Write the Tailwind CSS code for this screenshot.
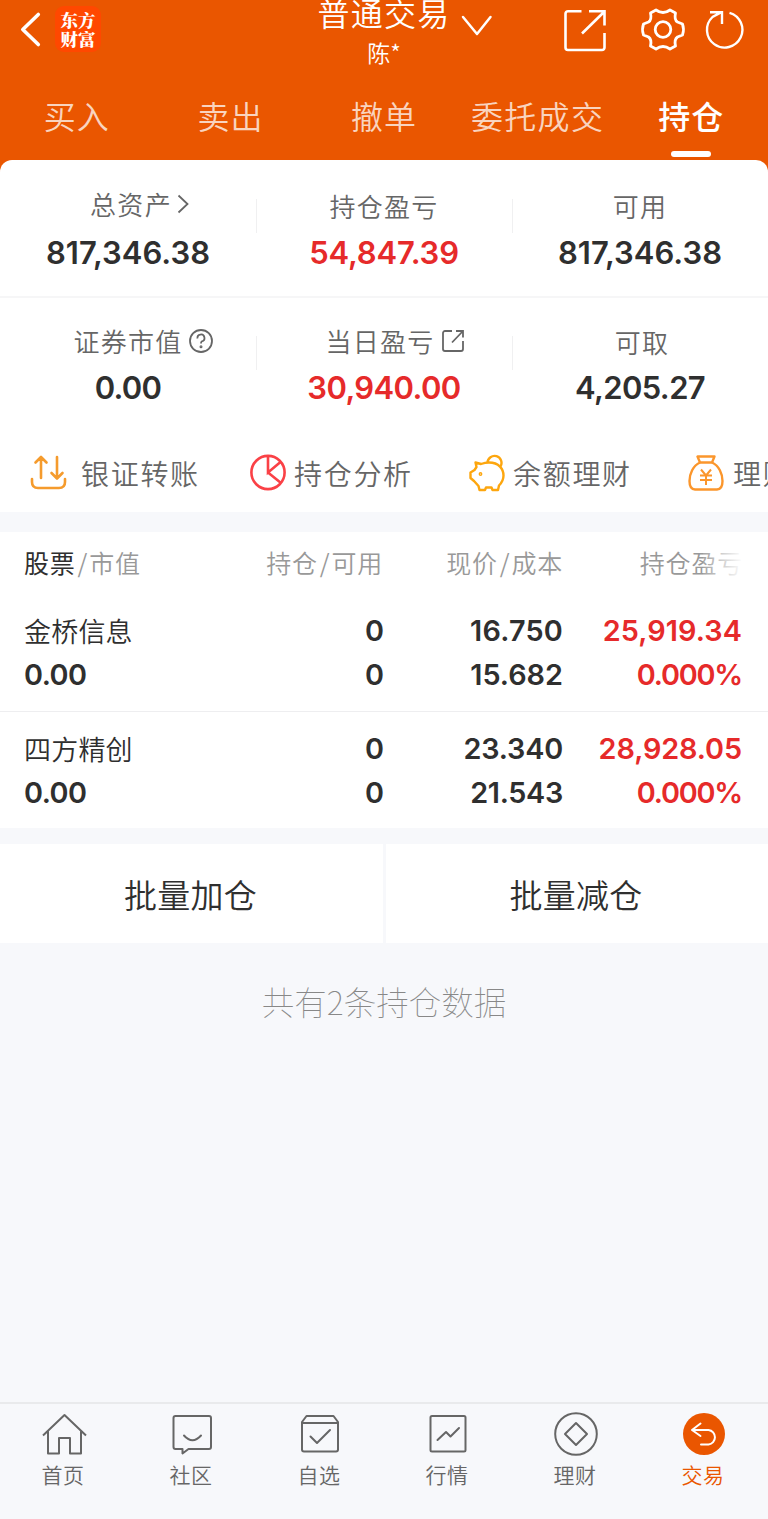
<!DOCTYPE html>
<html lang="zh-CN">
<head>
  <meta charset="UTF-8" />
  <meta name="viewport" content="width=device-width, initial-scale=1" />
  <title>普通交易 - 持仓</title>
  <script src="https://cdn.jsdelivr.net/npm/@tailwindcss/browser@4"></script>
</head>
<body class="w-[768px] h-[1519px] overflow-hidden flex flex-col bg-[#f7f8fb] font-['Noto_Sans_CJK_SC',sans-serif] font-[350] text-[#666]">

  <!-- header -->
  <header class="h-[160px] shrink-0 bg-[#ea5600] text-white flex flex-col">
    <div class="h-[74px] flex items-start">
      <div class="w-[228px] flex">
        <svg class="mt-[10px] ml-[18px] w-6 h-10" viewBox="0 0 24 40" fill="none" stroke="currentColor" stroke-width="3.6" stroke-linecap="round" stroke-linejoin="round"><path d="M20.300 4.500L4.800 19.500L20.300 34.500" /></svg>
        <div class="mt-[6px] ml-[13px] w-[46px] h-[46px] rounded-[9px] bg-[#ff4800] pt-[4px] text-center font-black font-['Noto_Serif_CJK_SC','Noto_Sans_CJK_SC',sans-serif] text-[17.500px] leading-[19px]">东方<br />财富</div>
      </div>
      <div class="w-[312px] h-[74px] flex flex-col items-center">
        <div class="-mt-[7px] h-10 leading-[38px] text-[32px] tracking-[1.300px]">普通交易</div>
        <div class="h-8 mt-[3px] leading-8 text-[23px]">陈*</div>
      </div>
      <svg class="-ml-[80px] mt-[12px] w-[34px] h-[26px]" viewBox="0 0 34 26" fill="none" stroke="currentColor" stroke-width="2.5" stroke-linecap="round" stroke-linejoin="round"><path d="M3 5L17 22L30.500 5" /></svg>
      <svg class="ml-[66px] mt-[6px] w-[48px] h-[48px]" viewBox="0 0 48 48" fill="none" stroke="currentColor" stroke-width="2.600"><path d="M21.500 5.300H8a2.500 2.500 0 0 0-2.500 2.500V41.500a2.500 2.500 0 0 0 2.500 2.500H42a2.500 2.500 0 0 0 2.500-2.500V27M29 5.300H44.500V19.500M44 6L22 27.500" /></svg>
      <svg class="ml-[32px] mt-[6px] w-[46px] h-[48px]" viewBox="0 0 46 48" fill="none" stroke="currentColor" stroke-width="2.800" stroke-linejoin="round"><path d="M16 4Q23 9 30 4L35.500 7Q34 14 37.500 16L42.500 18Q44.500 23.500 42.500 29L37.500 31Q34 33.500 35.500 40L30 43Q23 38 16 43L10.500 40Q12 33.500 8.500 31L3.500 29Q1.500 23.500 3.500 18L8.500 16Q12 14 10.500 7Z" /><circle cx="23" cy="23.500" r="7.800" /></svg>
      <svg class="ml-[17px] mt-[6px] w-[46px] h-[48px]" viewBox="0 0 46 48" fill="none" stroke="currentColor" stroke-width="2.400"><path d="M26.500 6.800A17.700 17.700 0 1 1 9.500 11L17.500 6.600M7 6.300H19V18" /></svg>
    </div>
    <nav class="h-[86px] grid grid-cols-5 text-center text-[32px] leading-[46px] tracking-[1px] pt-[18px] text-white/75">
      <div>买入</div>
      <div>卖出</div>
      <div>撤单</div>
      <div class="whitespace-nowrap tracking-[1.300px]">委托成交</div>
      <div class="text-white font-medium flex flex-col items-center">持仓<span class="mt-[13px] w-10 h-[6px] rounded-full bg-white"></span></div>
    </nav>
  </header>

  <!-- account summary -->
  <section class="bg-[#ea5600] shrink-0">
    <div class="h-[352px] bg-white rounded-t-[12px] overflow-hidden">
      <div class="h-[138px] grid grid-cols-3 border-b-2 border-[#f6f6f7] text-center">
        <div class="pt-[23px]">
          <div class="h-10 flex items-center justify-center text-[26px] tracking-[1.300px] pl-[23px]">总资产<svg class="mt-[2px] ml-[5px] w-3 h-5" viewBox="0 0 12 20" fill="none" stroke="currentColor" stroke-width="1.800"><path d="M1.500 1.500L10.500 10L1.500 18.500" /></svg></div>
          <div class="mt-[12px] h-9 leading-9 font-['Inter'] font-semibold text-[31px] text-[#2f2f2f]">817,346.38</div>
        </div>
        <div class="pt-[25px] relative">
          <i class="absolute left-0 top-[39px] w-px h-[34px] bg-[#f0f0f1]"></i>
          <i class="absolute -right-px top-[39px] w-px h-[34px] bg-[#f0f0f1]"></i>
          <div class="h-10 leading-[41px] text-[26px] tracking-[1.300px]">持仓盈亏</div>
          <div class="mt-[10px] h-9 leading-9 font-['Inter'] font-semibold text-[31px] tracking-[-0.200px] text-[#e62a2a]">54,847.39</div>
        </div>
        <div class="pt-[25px]">
          <div class="h-10 leading-[41px] text-[26px] tracking-[1.300px]">可用</div>
          <div class="mt-[10px] h-9 leading-9 font-['Inter'] font-semibold text-[31px] text-[#2f2f2f]">817,346.38</div>
        </div>
      </div>
      <div class="h-[134px] grid grid-cols-3 text-center">
        <div class="pt-[23px]">
          <div class="h-10 flex items-center justify-center text-[26px] tracking-[1.300px] pl-[31px] -mt-px">证券市值<svg class="mt-[2px] ml-[5px] w-[26px] h-[26px]" viewBox="0 0 26 26" fill="none" stroke="currentColor" stroke-width="1.800"><circle cx="13" cy="13" r="11" /><path d="M9.500 10.500A3.500 3.500 0 1 1 13.800 13.400Q13 13.900 13 15.500" /><circle cx="13" cy="18.700" r=".6" /></svg></div>
          <div class="mt-[10px] h-9 leading-9 font-['Inter'] font-semibold text-[31px] tracking-[-0.700px] text-[#2f2f2f]">0.00</div>
        </div>
        <div class="pt-[23px] relative">
          <i class="absolute left-0 top-[38px] w-px h-[34px] bg-[#f0f0f1]"></i>
          <i class="absolute -right-px top-[38px] w-px h-[34px] bg-[#f0f0f1]"></i>
          <div class="h-10 flex items-center justify-center text-[26px] tracking-[1.300px] pl-[22px] -mt-px">当日盈亏<svg class="mt-[2px] ml-[6px] w-6 h-6" viewBox="0 0 24 24" fill="none" stroke="currentColor" stroke-width="1.800"><path d="M11 2H4a2 2 0 0 0-2 2V20a2 2 0 0 0 2 2H20a2 2 0 0 0 2-2V12M15 2H22V8.500M22 2L11 13.500" /></svg></div>
          <div class="mt-[10px] h-9 leading-9 font-['Inter'] font-semibold text-[31px] tracking-[-0.600px] text-[#e62a2a]">30,940.00</div>
        </div>
        <div class="pt-[23px]">
          <div class="h-10 leading-[42px] text-[26px] tracking-[1.300px] pl-1">可取</div>
          <div class="mt-[9px] h-9 leading-9 font-['Inter'] font-semibold text-[31px] tracking-[-0.600px] text-[#2f2f2f]">4,205.27</div>
        </div>
      </div>

      <!-- shortcuts -->
      <div class="h-[80px] pt-px pl-[29px] flex items-center text-[28px] leading-[40px] tracking-[1.700px] whitespace-nowrap">
        <div class="w-[220px] shrink-0 flex items-center gap-[14px]">
          <svg class="w-[38px] h-[38px]" viewBox="0 0 38 38" fill="none" stroke="#f59b2d" stroke-width="2.600" stroke-linecap="round" stroke-linejoin="round"><path d="M12 24V3M6.500 8.500L12 3L17.500 8.500M28 3V24M22.500 19L28 24.500L33.500 19M3 25V28Q3 34 9 34H30Q36 34 36 28V25" /></svg>
          银证转账
        </div>
        <div class="w-[219px] shrink-0 flex items-center gap-[7px]">
          <svg class="w-[38px] h-[38px]" viewBox="0 0 38 38" fill="none" stroke="#fa4146" stroke-width="2.600"><circle cx="19" cy="18.500" r="16.600" /><path d="M19 2V18.500L31.500 8M19 18.500L32 29" /></svg>
          持仓分析
        </div>
        <div class="w-[219px] shrink-0 flex items-center gap-[7px]">
          <svg class="w-[38px] h-[38px]" viewBox="0 0 38 38" fill="none" stroke="#fda60e" stroke-width="2.400" stroke-linejoin="round"><path d="M7.500 8.500L13 10Q17 8.500 21 8.500C31 8.500 35.500 15 35.500 21.500C35.500 27 33 29.500 31 31.500L30 36H24.500L23.500 33.500H18L17 36H11.500L10.500 32L6 27L2.500 24V18.500L6.500 16L8.500 13Z" /><path d="M19.500 8.500A7 7 0 1 1 32.500 12.500" /><circle cx="12.500" cy="20" r=".7" /></svg>
          余额理财
        </div>
        <div class="w-[219px] shrink-0 flex items-center gap-[8px]">
          <svg class="w-[38px] h-[38px]" viewBox="0 0 38 38" fill="none" stroke="#fb962c" stroke-width="2.400" stroke-linejoin="round"><path d="M13 8.500L10.500 2.500H27.500L25 8.500Z" /><path d="M13 8.500C6 11.500 2.500 20 2.500 27Q2.500 35.500 8 35.500H30Q35.500 35.500 35.500 27C35.500 20 32 11.500 25 8.500" /><path stroke-width="2" d="M14 15.500L19 21.500L24 15.500M19 21.500V31M13 21.500H25M13 26H25" /></svg>
          理财产品
        </div>
      </div>
    </div>
  </section>

  <!-- positions -->
  <section class="mt-5 bg-white shrink-0 h-[296px] pl-6 pr-[26px]">
    <div class="h-[62px] leading-[60px] grid grid-cols-[179px_180px_180px_179px] text-[25px] tracking-[0.800px] text-[#999] text-right whitespace-nowrap">
      <div class="text-left"><span class="text-[#2f2f2f] font-normal">股票</span><span class="pl-[2px] pr-px">/</span>市值</div>
      <div>持仓<span class="pl-[2px] pr-px">/</span>可用</div>
      <div>现价<span class="pl-[2px] pr-px">/</span>成本</div>
      <div class="relative -mr-px">持仓盈亏<i class="absolute right-0 top-0 w-[40px] h-[62px] bg-linear-to-r from-white/10 to-white"></i></div>
    </div>
    <div class="-ml-6 -mr-[26px] pl-6 pr-[26px] h-[118px] border-b border-[#eeeef0] pt-[15px] grid grid-cols-[179px_180px_180px_179px] grid-rows-[44px_44px] leading-[44px] font-['Inter'] font-[570] text-[28.800px] text-[#2f2f2f] text-right">
      <div class="text-left font-['Noto_Sans_CJK_SC'] font-[350] text-[27px] tracking-[0.200px]">金桥信息</div>
      <div class="-mr-px">0</div>
      <div class="tracking-[0.200px]">16.750</div>
      <div class="tracking-[0.100px] text-[#e62a2a]">25,919.34</div>
      <div class="text-left leading-[43px] tracking-[-0.500px]">0.00</div>
      <div class="leading-[43px] -mr-px">0</div>
      <div class="leading-[43px]">15.682</div>
      <div class="leading-[43px] tracking-[-1.200px] text-[#e62a2a]">0.000%</div>
    </div>
    <div class="pt-[15px] grid grid-cols-[179px_180px_180px_179px] grid-rows-[44px_44px] leading-[44px] font-['Inter'] font-[570] text-[28.800px] text-[#2f2f2f] text-right">
      <div class="text-left font-['Noto_Sans_CJK_SC'] font-[350] text-[27px] tracking-[0.200px]">四方精创</div>
      <div class="-mr-px">0</div>
      <div class="tracking-[-0.200px]">23.340</div>
      <div class="tracking-[-0.100px] text-[#e62a2a]">28,928.05</div>
      <div class="text-left leading-[43px] tracking-[-0.500px]">0.00</div>
      <div class="leading-[43px] -mr-px">0</div>
      <div class="leading-[43px] tracking-[-0.300px]">21.543</div>
      <div class="leading-[43px] tracking-[-1.200px] text-[#e62a2a]">0.000%</div>
    </div>
  </section>

  <section class="mt-4 h-[99px] shrink-0 bg-white grid grid-cols-[386px_382px] text-center text-[33px] leading-[101px] tracking-[0.300px] text-[#2f2f2f]">
    <div class="border-r-3 border-[#f7f8fb] pr-[2px]">批量加仓</div>
    <div class="pr-[2px]">批量减仓</div>
  </section>

  <p class="mt-[34px] h-12 leading-[48px] text-center text-[32.500px] font-thin text-[#888]">共有2条持仓数据</p>

  <!-- bottom tab bar -->
  <footer class="mt-auto h-[117px] shrink-0 border-t-2 border-[#e9eaec] grid grid-cols-6 text-center text-[21px] leading-8 tracking-[0.500px]">
    <div class="pt-[7px] flex flex-col items-center">
      <svg class="w-12 h-12" viewBox="0 0 48 48" fill="none" stroke="currentColor" stroke-width="2" stroke-linejoin="round"><path d="M3 24.500L24.500 4L46 24.500M8 20.500V42.500H19V27H30V42.500H41V20.500" /></svg>
      <div class="-mt-px pr-[2px]">首页</div>
    </div>
    <div class="pt-[7px] flex flex-col items-center">
      <svg class="w-12 h-12" viewBox="0 0 48 48" fill="none" stroke="currentColor" stroke-width="2" stroke-linejoin="round"><path d="M7.500 5H41A2 2 0 0 1 43 7V36A2 2 0 0 1 41 38H20.500L14.500 42.500V38H7.500A2 2 0 0 1 5.500 36V7A2 2 0 0 1 7.500 5Z" /><path stroke-linecap="round" d="M16 24.500Q24.500 34 33 24.500" /></svg>
      <div class="-mt-px pr-[2px]">社区</div>
    </div>
    <div class="pt-[7px] flex flex-col items-center">
      <svg class="w-12 h-12" viewBox="0 0 48 48" fill="none" stroke="currentColor" stroke-width="2" stroke-linejoin="round"><path d="M6 11L10.500 5H37.500L42 11V38.500A2 2 0 0 1 40 40.500H8A2 2 0 0 1 6 38.500ZM6 12H42" /><path stroke-linecap="round" d="M14.500 25.500L21 32L34 19" /></svg>
      <div class="-mt-px pr-[2px]">自选</div>
    </div>
    <div class="pt-[7px] flex flex-col items-center">
      <svg class="w-12 h-12" viewBox="0 0 48 48" fill="none" stroke="currentColor" stroke-width="2" stroke-linejoin="round"><rect x="6.500" y="5" width="35" height="35.500" rx="1.500" /><path stroke-linecap="round" d="M13.500 29L22 21L26.500 25.500L35 17" /></svg>
      <div class="-mt-px pr-[2px]">行情</div>
    </div>
    <div class="pt-[7px] flex flex-col items-center">
      <svg class="w-12 h-12" viewBox="0 0 48 48" fill="none" stroke="currentColor" stroke-width="2" stroke-linejoin="round"><circle cx="24" cy="23" r="20.800" /><path d="M24 12L35 23L24 34L13 23Z" /></svg>
      <div class="-mt-px pr-[2px]">理财</div>
    </div>
    <div class="pt-[7px] flex flex-col items-center text-[#ea5600]">
      <svg class="w-12 h-12" viewBox="0 0 48 48" fill="none" stroke="#fff" stroke-width="2" stroke-linejoin="round" stroke-linecap="round"><circle cx="24" cy="23" r="21" fill="#ea5600" stroke="none" /><path d="M20.500 12.500L12 19L20.500 25M12 19H28.500A7.300 7.300 0 0 1 28.500 33.500H21" /></svg>
      <div class="-mt-px pr-[2px]">交易</div>
    </div>
  </footer>
</body>
</html>
